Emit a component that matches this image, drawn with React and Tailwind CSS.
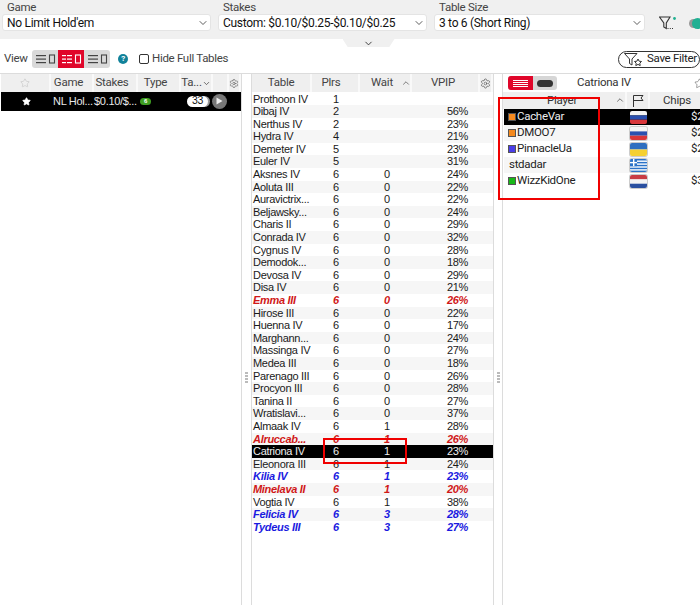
import React from "react";
import { ChevronDown, ChevronUp, Settings, Star } from "lucide-react";

const rows = [
  ["Prothoon IV", "1", "", ""], ["Dibaj IV", "2", "", "56%"], ["Nerthus IV", "2", "", "23%"], ["Hydra IV", "4", "", "21%"],
  ["Demeter IV", "5", "", "23%"], ["Euler IV", "5", "", "31%"], ["Aksnes IV", "6", "0", "24%"], ["Aoluta III", "6", "0", "22%"],
  ["Auravictrix...", "6", "0", "22%"], ["Beljawsky...", "6", "0", "24%"], ["Charis II", "6", "0", "29%"], ["Conrada IV", "6", "0", "32%"],
  ["Cygnus IV", "6", "0", "28%"], ["Demodok...", "6", "0", "18%"], ["Devosa IV", "6", "0", "29%"], ["Disa IV", "6", "0", "21%"],
  ["Emma III", "6", "0", "26%", "r"], ["Hirose III", "6", "0", "22%"], ["Huenna IV", "6", "0", "17%"], ["Marghann...", "6", "0", "24%"],
  ["Massinga IV", "6", "0", "27%"], ["Medea III", "6", "0", "18%"], ["Parenago III", "6", "0", "26%"], ["Procyon III", "6", "0", "28%"],
  ["Tanina II", "6", "0", "27%"], ["Wratislavi...", "6", "0", "37%"], ["Almaak IV", "6", "1", "28%"], ["Alruccab...", "6", "1", "26%", "r"],
  ["Catriona IV", "6", "1", "23%", "s"], ["Eleonora III", "6", "1", "24%"], ["Kilia IV", "6", "1", "23%", "b"], ["Minelava II", "6", "1", "20%", "r"],
  ["Vogtia IV", "6", "1", "38%"], ["Felicia IV", "6", "3", "28%", "b"], ["Tydeus III", "6", "3", "27%", "b"],
];

function Select({ label, value, className }) {
  return (
    <div className={`shrink-0 ${className}`}>
      <div className="h-[14px] pl-[5px] text-[11.5px] leading-[14px] tracking-[-0.3px] text-[#444]">{label}</div>
      <div className="flex h-[17px] items-center justify-between rounded-[3px] border border-[#e4e4e4] bg-white pl-[4px] pr-px text-[12px] tracking-[-0.3px] text-[#111]">
        <span className="whitespace-nowrap">{value}</span>
        <ChevronDown size={12} strokeWidth={1.6} className="shrink-0 text-[#333]" />
      </div>
    </div>
  );
}

function ListIcon({ red }) {
  const c = red ? "#fff" : "#444";
  const ys = [5, 8.5, 12];
  return (
    <svg width="26" height="18" viewBox="0 0 26 18" className="shrink-0">
      {ys.map((y) =>
        red ? (
          <g key={y}>
            <rect x="4" y={y} width="4" height="1.2" fill={c} />
            <rect x="9" y={y} width="5" height="1.2" fill={c} />
          </g>
        ) : (
          <rect key={y} x="4" y={y} width="10" height="1.2" fill={c} />
        )
      )}
      <rect x="17.5" y="5" width="5" height="8" fill="none" stroke={c} strokeWidth="1.1" />
    </svg>
  );
}

function Header() {
  return (
    <>
      <div className="flex h-[39px] items-start gap-[7px] bg-[#f0f0f0] pl-[2px]">
        <Select label="Game" value="No Limit Hold'em" className="w-[209px]" />
        <Select label="Stakes" value="Custom: $0.10/$0.25-$0.10/$0.25" className="w-[209px]" />
        <Select label="Table Size" value="3 to 6 (Short Ring)" className="w-[211px]" />
        <div className="ml-[7px] mt-[15px] flex shrink-0 items-center">
          <svg width="18" height="16" viewBox="0 0 18 16" fill="none" stroke="#333" strokeWidth="1.1">
            <path d="M0.5 2h10.5L7.3 8v5.5L4.8 12V8Z" />
            <path d="M8.5 13.5h1M10.8 13.5h1M13 13.5h1" />
            <circle cx="15.5" cy="3.5" r="1.4" fill="#20b090" stroke="none" />
          </svg>
          <div className="relative ml-[12px] h-[9px] w-[14px] rounded-l-full bg-[#999]">
            <div className="absolute left-[3px] top-[-1px] h-[11px] w-[11px] rounded-full bg-[#21b093]" />
          </div>
        </div>
      </div>
      <div className="flex h-[8px] justify-center pl-[37px]">
        <div className="flex h-[8px] w-[52px] items-center justify-center bg-[#f0f0f0] [clip-path:polygon(0_0,100%_0,90%_100%,10%_100%)]">
          <ChevronDown size={11} strokeWidth={2} className="text-[#333]" />
        </div>
      </div>
    </>
  );
}

function ViewRow() {
  return (
    <div className="mt-[3px] flex h-[18px] items-center pl-[4px] text-[11.5px] tracking-[-0.3px] text-[#444]">
      <span className="w-[28px] shrink-0">View</span>
      <div className="flex h-[18px] w-[78px] shrink-0 overflow-hidden rounded-[3px] bg-[#d9d9d9]">
        <ListIcon />
        <div className="h-full bg-[#e0062a]"><ListIcon red /></div>
        <ListIcon />
      </div>
      <div className="ml-[8px] flex h-[10px] w-[10px] shrink-0 items-center justify-center rounded-full bg-[#11829a] text-[8px] font-bold text-white">?</div>
      <div className="ml-[11px] h-[10px] w-[10px] shrink-0 rounded-[2px] border border-[#333] bg-white" />
      <span className="ml-[3px] whitespace-nowrap">Hide Full Tables</span>
      <div className="ml-auto flex h-[17px] w-[82px] shrink-0 items-center rounded-full border border-[#333] pl-[5px] text-[#222]">
        <svg width="19" height="15" viewBox="0 0 19 15" fill="none" stroke="#333" strokeWidth="1" className="shrink-0">
          <path d="M0.5 1.5h12.5L8 7v6L5.5 11.5V7Z" />
          <path d="M14 7l1.1 2.2 2.4.3-1.7 1.7.4 2.4-2.2-1.2-2.2 1.2.4-2.4-1.7-1.7 2.4-.3Z" />
        </svg>
        <span className="ml-[4px] whitespace-nowrap">Save Filter</span>
      </div>
    </div>
  );
}

function Th({ w, children, className = "" }) {
  return (
    <div style={{ width: w }} className={`flex h-full shrink-0 items-center justify-center border-r-2 border-[#f9f9f9] bg-[#efefef] text-[11.5px] tracking-[-0.25px] text-[#444] ${className}`}>
      {children}
    </div>
  );
}

function LeftPanel() {
  return (
    <div className="flex w-[242px] shrink-0 flex-col border-r border-[#dcdcdc] pl-[1px]">
      <div className="flex h-[18px]">
        <Th w={50}><Star size={10} className="text-[#bbb]" strokeWidth={1.2} /></Th>
        <Th w={43} className="pr-[6px]">Game</Th>
        <Th w={44} className="pr-[6px]">Stakes</Th>
        <Th w={43} className="pr-[6px]">Type</Th>
        <Th w={32}>Ta...<ChevronDown size={9} strokeWidth={2} /></Th>
        <Th w={16} />
        <Th w={12}><Settings size={11} strokeWidth={1.3} /></Th>
      </div>
      <div className="flex h-[18.5px] items-center bg-black text-[11px] tracking-[-0.3px] text-[#e8e8e8] font-['Liberation_Sans',sans-serif]">
        <div className="flex w-[50px] shrink-0 justify-center"><Star size={9} fill="white" className="text-white" /></div>
        <span className="ml-[2px] w-[41px] shrink-0 whitespace-nowrap">NL Hol...</span>
        <span className="w-[46px] shrink-0 whitespace-nowrap">$0.10/$...</span>
        <span className="flex h-[7px] w-[11px] shrink-0 items-center justify-center rounded-full bg-[#3f9e22] text-[6px] font-bold text-white">6</span>
        <span className="ml-[36px] flex h-[11px] w-[21px] shrink-0 items-center justify-center rounded-full bg-white text-[10.5px] text-[#111] shadow-[2px_0_0_#999]">33</span>
        <span className="ml-[4px] flex h-[15px] w-[15px] shrink-0 items-center justify-center rounded-full bg-[#777]">
          <svg width="7" height="8" viewBox="0 0 7 8"><path d="M0.5 0.5 6.5 4 0.5 7.5Z" fill="#eee" /></svg>
        </span>
      </div>
    </div>
  );
}

function CenterPanel() {
  return (
    <div className="ml-[9px] flex w-[243px] shrink-0 flex-col border-x border-[#dcdcdc]">
      <div className="flex h-[18px]">
        <Th w={60} className="text-[#222]">Table</Th>
        <Th w={48} className="pr-[8px] text-[#222]">Plrs</Th>
        <Th w={52} className="relative pr-[6px] text-[#222]"><span>Wait</span><ChevronUp size={10} strokeWidth={1.6} className="absolute right-[-1px] top-[4px]" /></Th>
        <Th w={68} className="pr-[4px] text-[#222]">VPIP</Th>
        <Th w={13}><Settings size={11} strokeWidth={1.3} /></Th>
      </div>
      <div className="mt-[0.5px] font-['Liberation_Sans',sans-serif] text-[11px] tracking-[-0.3px]">
        {rows.map((r, i) => {
          const k = r[4];
          const bg = i % 2 ? "bg-[#f6f6f6]" : "bg-white";
          let cls = `${bg} text-[#1a1a1a]`;
          if (k === "r") cls = `${bg} italic font-bold text-[#d01818]`;
          if (k === "b") cls = `${bg} italic font-bold text-[#1a1ae0]`;
          if (k === "s") cls = "bg-black text-[#eee]";
          return (
            <div key={r[0]} className={`flex h-[12.6px] items-center leading-[12.6px] ${cls}`}>
              <span className="ml-[1px] w-[70px] shrink-0 whitespace-nowrap">{r[0]}</span>
              <span className="w-[26px] shrink-0 text-center">{r[1]}</span>
              <span className="w-[76px] shrink-0 text-center">{r[2]}</span>
              <span className="w-[43px] shrink-0 text-right">{r[3]}</span>
            </div>
          );
        })}
      </div>
    </div>
  );
}

const Russia = () => (
  <svg width="17" height="13" viewBox="0 0 17 13" className="block"><rect width="17" height="4.4" fill="#f4f4f4" /><rect y="4.4" width="17" height="4.3" fill="#2a50b0" /><rect y="8.7" width="17" height="4.3" fill="#d8363a" /></svg>
);
const Ukraine = () => (
  <svg width="17" height="13" viewBox="0 0 17 13" className="block"><rect width="17" height="6.5" fill="#2f6fc0" /><rect y="6.5" width="17" height="6.5" fill="#f5d030" /></svg>
);
const Greece = () => (
  <svg width="17" height="13" viewBox="0 0 17 13" className="block">
    <rect width="17" height="13" fill="#2a72c8" />
    {[1.5, 4.4, 7.3, 10.2].map((y) => <rect key={y} y={y} x="0" width="17" height="1.4" fill="#fff" />)}
    <rect width="7" height="7.2" fill="#2a72c8" />
    <rect x="3" width="1.4" height="7.2" fill="#fff" />
    <rect y="2.9" width="7" height="1.4" fill="#fff" />
  </svg>
);
const Netherlands = () => (
  <svg width="17" height="13" viewBox="0 0 17 13" className="block"><rect width="17" height="4.4" fill="#c83c44" /><rect y="4.4" width="17" height="4.3" fill="#f4f4f4" /><rect y="8.7" width="17" height="4.3" fill="#2a50a0" /></svg>
);

const players = [
  ["CacheVar", "#f58a1f", <Russia />, "$2", true],
  ["DMOO7", "#f58a1f", <Russia />, "$2"],
  ["PinnacleUa", "#4a3ee8", <Ukraine />, "$2"],
  ["stdadar", null, <Greece />, ""],
  ["WizzKidOne", "#18b818", <Netherlands />, "$3"],
];

function RightPanel() {
  return (
    <div className="ml-[8px] flex min-w-0 flex-1 flex-col overflow-hidden border-l border-[#dcdcdc]">
      <div className="flex h-[18px] items-center pl-[5px]">
        <div className="flex h-[14px] w-[49px] shrink-0 overflow-hidden rounded-[3px] bg-[#d6d6d6]">
          <div className="flex w-[25px] flex-col items-center justify-center gap-[1px] bg-[#e0062a]">
            {[0, 1, 2, 3].map((i) => <div key={i} className="h-px w-[15px] bg-white" />)}
          </div>
          <div className="flex flex-1 items-center justify-center"><div className="h-[7px] w-[16px] rounded-full bg-[#333]" /></div>
        </div>
        <span className="ml-[20px] whitespace-nowrap text-[11.5px] tracking-[-0.25px] text-[#333]">Catriona IV</span>
        <Star size={11} strokeWidth={1.2} className="ml-auto -mr-[5px] shrink-0 text-[#555]" />
      </div>
      <div className="flex h-[17px] w-[201px] text-[11.5px] tracking-[-0.25px] text-[#333]">
        <div className="relative flex h-full w-[124px] shrink-0 items-center justify-center border-r-2 border-[#f9f9f9] bg-[#efefef] pr-[4px]">
          <span>Player</span>
          <ChevronUp size={10} strokeWidth={1.6} className="absolute right-0 top-[3px]" />
        </div>
        <div className="flex w-[23px] shrink-0 items-center justify-center border-r-2 border-[#f9f9f9] bg-[#efefef]">
          <svg width="12" height="13" viewBox="0 0 12 13" fill="none" stroke="#333" strokeWidth="1"><path d="M1.5 13V1.5h9.5l-2 2.5 2 2.5H1.5" /></svg>
        </div>
        <div className="flex flex-1 items-center justify-center bg-[#efefef]">Chips</div>
      </div>
      <div>
        {players.map(([n, c, f, chips, sel], i) => (
          <div key={n} className={`ml-[1px] flex h-[16px] items-center text-[11.5px] tracking-[-0.3px] ${sel ? "bg-black text-[#eee]" : i % 2 ? "bg-[#f6f6f6] text-[#222]" : "bg-white text-[#222]"}`}>
            <div className="flex w-[126px] shrink-0 items-center pl-[4px]">
              {c && <span style={{ backgroundColor: c }} className="h-[8px] w-[8px] shrink-0 border border-[#555]" />}
              <span className="ml-[1px]">{n}</span>
            </div>
            <span className={`shrink-0 overflow-hidden rounded-[2px] ${sel ? "" : "shadow-[0_0_0_1px_#ccc]"}`}>{f}</span>
            <span className="ml-[44px] shrink-0 whitespace-nowrap">{chips}</span>
          </div>
        ))}
      </div>
    </div>
  );
}

export default function App() {
  return (
    <div className="relative h-[605px] w-[700px] overflow-hidden bg-white font-['Roboto',sans-serif]">
      <Header />
      <ViewRow />
      <div className="mt-[5px] flex h-[532px] border-t border-[#dcdcdc]">
        <LeftPanel />
        <CenterPanel />
        <RightPanel />
      </div>
      <div className="absolute left-[245px] top-[372px] flex flex-col gap-[1px]">
        {[0, 1, 2, 3].map((i) => <div key={i} className="h-[2px] w-[3px] bg-[#bbb]" />)}
      </div>
      <div className="absolute left-[497px] top-[372px] flex flex-col gap-[1px]">
        {[0, 1, 2, 3].map((i) => <div key={i} className="h-[2px] w-[3px] bg-[#bbb]" />)}
      </div>
      <div className="pointer-events-none absolute left-[498px] top-[97px] h-[103px] w-[102px] border-2 border-[#f00000]" />
      <div className="pointer-events-none absolute left-[323px] top-[438px] h-[26px] w-[84px] border-2 border-[#f00000]" />
    </div>
  );
}
